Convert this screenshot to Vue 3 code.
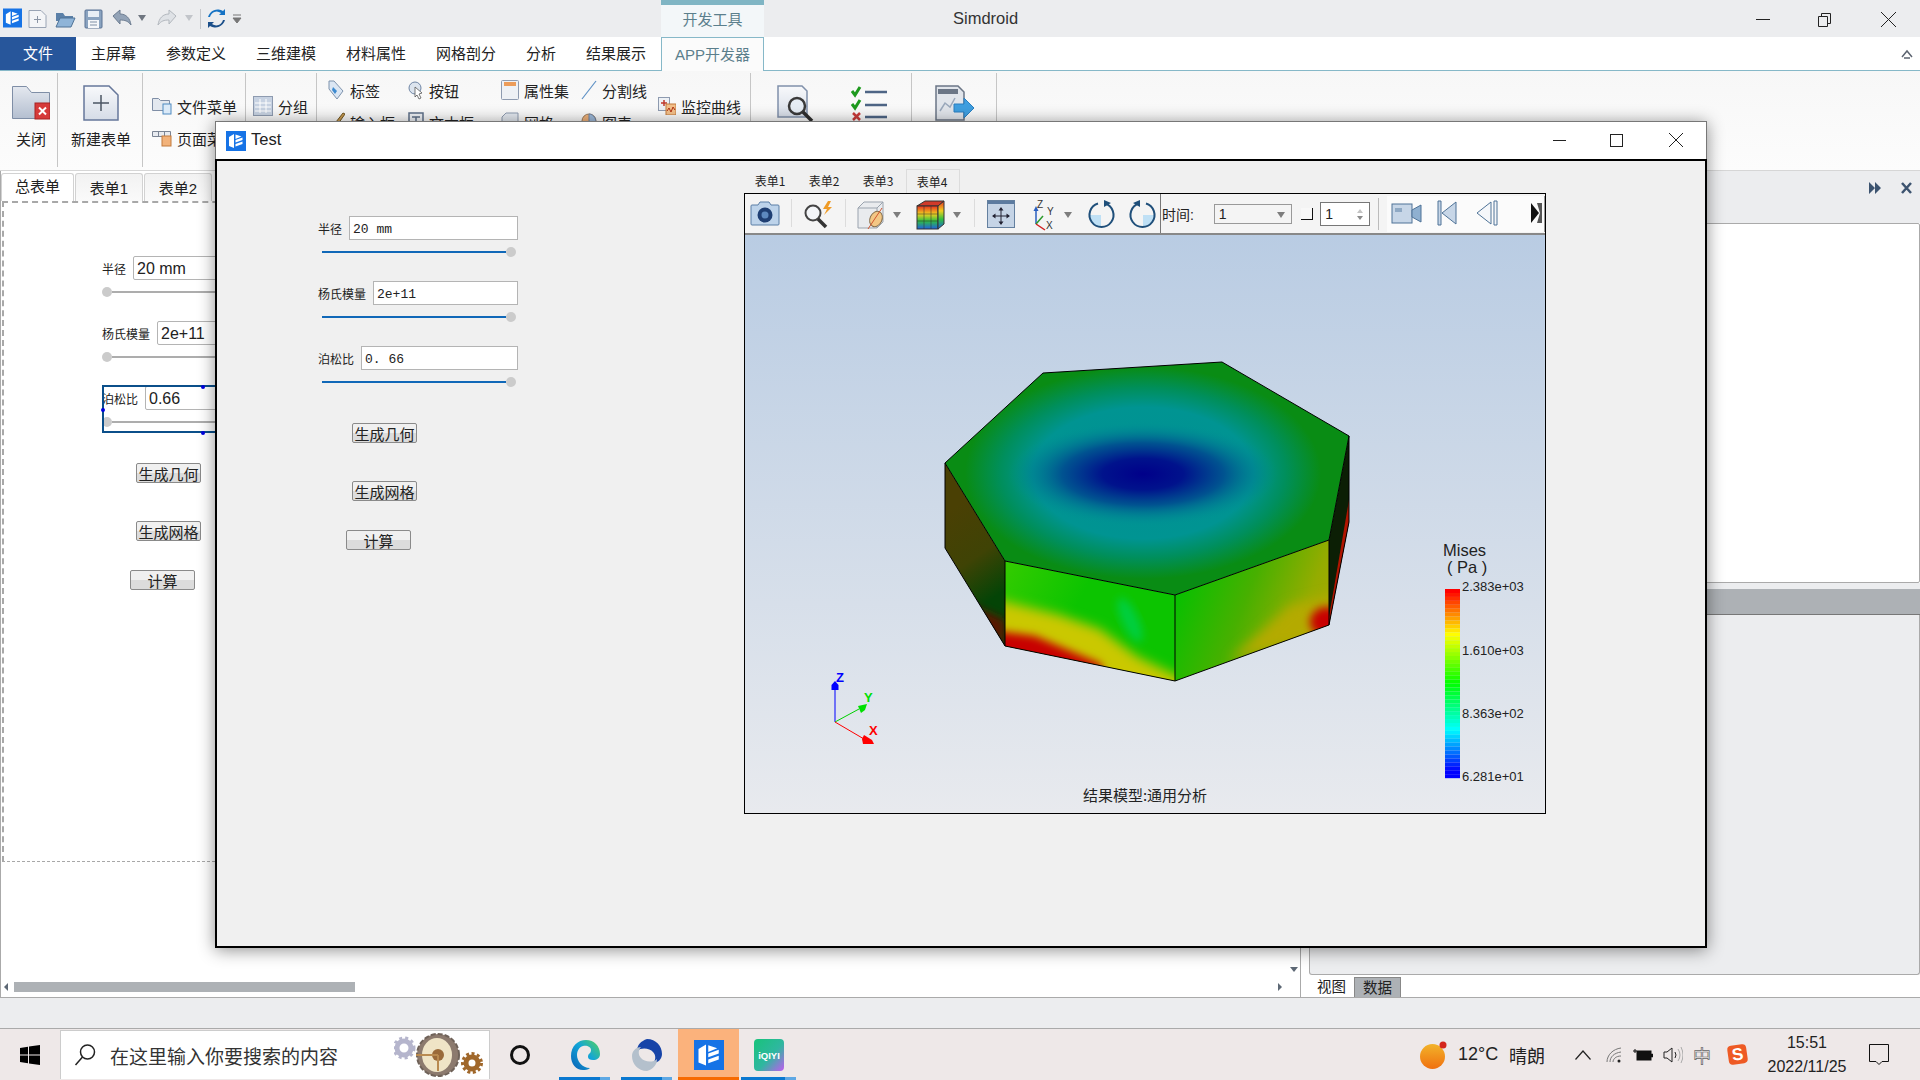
<script setup>
const menus = ['主屏幕', '参数定义', '三维建模', '材料属性', '网格剖分', '分析', '结果展示']

const fields = [
  { label: '半径', value: '20 mm' },
  { label: '杨氏模量', value: '2e+11' },
  { label: '泊松比', value: '0.66', picked: true },
]
const runForm = [
  { label: '半径', value: '20 mm' },
  { label: '杨氏模量', value: '2e+11' },
  { label: '泊松比', value: '0. 66' },
]

const stops = [[0, 0], [0.236, 60], [0.5, 120], [0.75, 180], [0.97, 240], [1, 240]]
function hueAt(t) {
  for (let i = 1; i < stops.length; i++) {
    if (t <= stops[i][0]) {
      const [a, ha] = stops[i - 1]
      const [b, hb] = stops[i]
      return ha + (hb - ha) * (t - a) / (b - a)
    }
  }
  return 240
}
const bands = Array.from({ length: 48 }, (_, i) => ({
  y: 589 + i * 3.94,
  fill: `hsl(${hueAt(i / 47)}, 100%, 50%)`,
}))
const ticks = [
  { y: 591, text: '2.383e+03' },
  { y: 655, text: '1.610e+03' },
  { y: 718, text: '8.363e+02' },
  { y: 781, text: '6.281e+01' },
]
</script>

<template>
  <div class="app">
    <svg class="defs">
      <defs>
        <symbol id="logo" viewBox="0 0 20 20">
          <rect width="20" height="20" fill="#1673e6" />
          <path d="M3 6l5-3v14l-5-2z" fill="#fff" />
          <path d="M9.5 3.5l6 2-6 2.5zM9.5 9l7-2.5V9l-7 2.500zM9.5 13l7-2.500V13l-7 2.500z" fill="#fff" />
        </symbol>
        <linearGradient id="folder" x1="0" y1="0" x2="0" y2="1">
          <stop offset="0" stop-color="#e4e8ef" />
          <stop offset="1" stop-color="#b4bfd0" />
        </linearGradient>
        <linearGradient id="sheet" x1="0" y1="0" x2="0" y2="1">
          <stop offset="0" stop-color="#f8f9fb" />
          <stop offset="1" stop-color="#d5dce7" />
        </linearGradient>
        <linearGradient id="rainbow" x1="0" y1="0" x2="0" y2="1">
          <stop offset="0" stop-color="#e83020" />
          <stop offset="0.35" stop-color="#f0d020" />
          <stop offset="0.65" stop-color="#30c040" />
          <stop offset="1" stop-color="#2060e0" />
        </linearGradient>
        <linearGradient id="edge" x1="0" y1="1" x2="1" y2="0">
          <stop offset="0" stop-color="#0a5fb4" />
          <stop offset="0.55" stop-color="#12a5d8" />
          <stop offset="1" stop-color="#56d35a" />
        </linearGradient>
        <linearGradient id="iqiyi" x1="0" y1="0" x2="1" y2="1">
          <stop offset="0" stop-color="#18c37a" />
          <stop offset="0.55" stop-color="#2fb7a0" />
          <stop offset="1" stop-color="#c05cf0" />
        </linearGradient>
        <linearGradient id="sun" x1="0" y1="0" x2="0" y2="1">
          <stop offset="0" stop-color="#f2b32a" />
          <stop offset="1" stop-color="#f0700f" />
        </linearGradient>
      </defs>
    </svg>

    <!-- title bar -->
    <header class="titlebar">
      <div class="quick">
        <svg width="250" height="37" viewBox="0 0 250 37">
          <use href="#logo" x="3" y="8" width="19" height="20" />
          <path d="M29 10.500h12l5 5v12H29z" fill="#f4f5f7" stroke="#9aa4b4" />
          <path d="M37.500 16v7M34 19.500h7" stroke="#8b95a5" />
          <path d="M56 13h7l2 3h8v5H56z" fill="#5b80a8" />
          <path d="M56 27l4-9h15l-4 9z" fill="#8fb4d8" stroke="#4f7397" />
          <rect x="85" y="10" width="17" height="18" rx="1" fill="#8aa3c0" stroke="#5a7394" />
          <rect x="88" y="11" width="11" height="6" fill="#e8eef5" />
          <rect x="88" y="20" width="11" height="8" fill="#f5f7fa" />
          <path d="M90 22h7M90 25h7" stroke="#7f8fa5" />
          <path d="M113 16l7-6v4c6 0 10 4 11 11-3-4-6-5-11-5v4z" fill="#93a3b7" stroke="#6c7c90" />
          <path d="M138 15h8l-4 6z" fill="#6f7680" />
          <path d="M176 16l-7-6v4c-6 0-10 4-11 11 3-4 6-5 11-5v4z" fill="#dfe2e6" stroke="#b2b7bd" />
          <path d="M185 15h8l-4 6z" fill="#c2c5ca" />
          <path d="M200.500 9v20" stroke="#c4c6ca" />
          <path d="M210 17a7 7 0 0 1 11-4l-2 2h6V9l-2 2a10 10 0 0 0-15 6z" fill="#1673c4" />
          <path d="M223 20a7 7 0 0 1-11 4l2-2h-6v6l2-2a10 10 0 0 0 15-6z" fill="#1b4f8a" />
          <path d="M233 15h8M233 18h8l-4 5z" fill="#777" stroke="#777" />
        </svg>
      </div>
      <div class="context-tab">开发工具</div>
      <div class="app-title">Simdroid</div>
      <svg class="win-btns" width="141" height="20" viewBox="0 0 141 20">
        <path d="M0 10.500h14" stroke="#222" />
        <path d="M62.500 7.500h9v10h-9zM65.500 7.500v-3h9v10h-3" fill="none" stroke="#222" />
        <path d="M125 3l15 15M140 3l-15 15" stroke="#222" />
      </svg>
    </header>

    <!-- menu row -->
    <nav class="menubar">
      <div class="file-tab">文件</div>
      <div v-for="m in menus" :key="m" class="menu-item">{{ m }}</div>
      <div class="menu-item active">APP开发器</div>
      <svg class="collapse" width="12" height="10" viewBox="0 0 12 10">
        <path d="M1 8l5-6 5 6M3 9h6" fill="none" stroke="#5c6470" stroke-width="1.500" />
      </svg>
    </nav>

    <!-- ribbon -->
    <section class="ribbon">
      <div class="rb-big g-close">
        <svg width="38" height="36" viewBox="0 0 38 36">
          <path d="M.5 1.500h14l5 6h18v26H.5z" fill="url(#folder)" stroke="#7f8ea6" />
          <rect x="23" y="18" width="15" height="16" fill="#d63a3a" stroke="#a82222" />
          <path d="M27 22.500l7 7M34 22.500l-7 7" stroke="#fff" stroke-width="2" />
        </svg>
        <span>关闭</span>
      </div>
      <div class="rb-big g-new">
        <svg width="36" height="36" viewBox="0 0 36 36">
          <path d="M1 1h25l9 9v25H1z" fill="url(#sheet)" stroke="#66779a" stroke-width="1.500" />
          <path d="M18 10v16M10 18h16" stroke="#4b5563" stroke-width="1.500" />
        </svg>
        <span>新建表单</span>
      </div>
      <div class="rb-col g-menu">
        <div class="rb-item">
          <svg width="20" height="18" viewBox="0 0 20 18">
            <path d="M.5 1.500h6l2 2h9v10H.5z" fill="#e3e8ef" stroke="#7f8ea6" />
            <rect x="11" y="7" width="8" height="10" fill="#dbeaf8" stroke="#4f8ac0" />
          </svg>
          <span>文件菜单</span>
        </div>
        <div class="rb-item">
          <svg width="20" height="18" viewBox="0 0 20 18">
            <path d="M.5 2.500h18v5H.5zM6.500 2.500v5M12.500 2.500v5" fill="#e8ebf0" stroke="#7b8494" />
            <rect x="10" y="7" width="9" height="10" fill="#f2b27a" stroke="#c27a3c" />
          </svg>
          <span>页面菜单</span>
        </div>
      </div>
      <div class="rb-col g-group">
        <div class="rb-item">
          <svg width="20" height="20" viewBox="0 0 20 20">
            <rect x=".5" y=".5" width="19" height="19" fill="#c7d2e2" stroke="#8e9bb0" />
            <path d="M7 3v14M13 3v14M2 7h16M2 11h16M2 15h16" stroke="#fff" />
          </svg>
          <span>分组</span>
        </div>
      </div>
      <div class="rb-grid g-widgets">
        <div class="rb-item">
          <svg width="18" height="20" viewBox="0 0 18 20">
            <path d="M2 1h5l9 10-6 8-8-10z" fill="#dbe6f3" stroke="#7f93ad" />
            <path d="M6 7l4 4-2 3-3-4z" fill="#3d8ad0" />
          </svg>
          <span>标签</span>
        </div>
        <div class="rb-item">
          <svg width="16" height="20" viewBox="0 0 16 20">
            <circle cx="7" cy="8" r="6" fill="#dce4ee" stroke="#6e85a5" />
            <path d="M7 7l7 6-3 1 2 4-2 1-2-4-2 2z" fill="#fff" stroke="#555" stroke-width=".8" />
          </svg>
          <span>按钮</span>
        </div>
        <div class="rb-item">
          <svg width="18" height="20" viewBox="0 0 18 20">
            <rect x=".5" y=".5" width="17" height="19" rx="1" fill="#eef1f5" stroke="#8e9bb0" />
            <rect x="3" y="2" width="12" height="4" fill="#ec9c5a" />
          </svg>
          <span>属性集</span>
        </div>
        <div class="rb-item">
          <svg width="16" height="20" viewBox="0 0 16 20">
            <path d="M1 19L15 1" stroke="#5d90c4" stroke-width="1.200" />
          </svg>
          <span>分割线</span>
        </div>
        <div class="rb-item rb-span">
          <svg width="18" height="18" viewBox="0 0 18 18">
            <rect x=".5" y=".5" width="11" height="13" fill="#eef1f5" stroke="#8e9bb0" />
            <path d="M6 3v6M3 6h6" stroke="#c0392b" stroke-width="1.500" />
            <rect x="8" y="7" width="10" height="11" fill="#f4c08a" stroke="#c27a3c" />
            <path d="M9 14l2-3 2 4 2-5 2 3" fill="none" stroke="#b03010" />
          </svg>
          <span>监控曲线</span>
        </div>
        <div class="rb-item">
          <svg width="18" height="20" viewBox="0 0 18 20">
            <path d="M0 10h11v9H0z" fill="#cfd6e0" stroke="#7b8494" />
            <path d="M9 10l7-9 2 1-7 10z" fill="#c99a50" stroke="#6e5520" />
          </svg>
          <span>输入框</span>
        </div>
        <div class="rb-item">
          <svg width="16" height="20" viewBox="0 0 16 20">
            <rect x="1" y="1" width="14" height="16" fill="#eef1f5" stroke="#5e6f88" stroke-width="1.500" />
            <path d="M4 5h8M8 5v8" stroke="#5e6f88" stroke-width="1.500" />
          </svg>
          <span>文本框</span>
        </div>
        <div class="rb-item">
          <svg width="18" height="20" viewBox="0 0 18 20">
            <path d="M1 5l4-4h12v14H1z" fill="#e3e8ef" stroke="#8e9bb0" />
          </svg>
          <span>网格</span>
        </div>
        <div class="rb-item">
          <svg width="16" height="20" viewBox="0 0 16 20">
            <circle cx="8" cy="9" r="7" fill="#f0b27a" stroke="#9a7a5a" />
            <path d="M8 9V2a7 7 0 0 1 6 10z" fill="#9db9d9" stroke="#6e85a5" />
          </svg>
          <span>图表</span>
        </div>
      </div>
      <div class="rb-group g-tools">
        <svg class="ic-find" width="38" height="38" viewBox="0 0 38 38">
          <path d="M1 1h24l5 5v26H1z" fill="url(#sheet)" stroke="#8090aa" stroke-width="1.500" />
          <circle cx="20" cy="21" r="8" fill="#e6edf5" stroke="#3a3a3a" stroke-width="2.500" />
          <path d="M26 27l9 9" stroke="#2f2f2f" stroke-width="3.500" />
        </svg>
        <svg class="ic-check" width="38" height="36" viewBox="0 0 38 36">
          <path d="M1 5l3 4 5-8" fill="none" stroke="#1e9a1e" stroke-width="3" />
          <path d="M1 18l3 4 5-8" fill="none" stroke="#1e9a1e" stroke-width="3" />
          <path d="M2 27l7 7M9 27l-7 7" stroke="#c83a3a" stroke-width="2.500" />
          <path d="M14 6h22M14 19h22M14 31h22" stroke="#4e6585" stroke-width="2.500" />
        </svg>
      </div>
      <div class="rb-group g-export">
        <svg width="40" height="36" viewBox="0 0 40 36">
          <path d="M1 1h22l6 6v28H1z" fill="#e1e5eb" stroke="#6b7686" stroke-width="1.500" />
          <rect x="3" y="4" width="20" height="5" fill="#6b7686" />
          <path d="M5 26l5-8 5 4 5-9" fill="none" stroke="#9aa8bb" stroke-width="1.500" />
          <path d="M19 19h10v-6l10 10-10 10v-6H19z" fill="#3f9fe0" stroke="#2a7fc0" />
        </svg>
      </div>
    </section>

    <!-- workspace under the dialog -->
    <main class="workspace">
      <section class="designer">
        <div class="doc-tabs">
          <div class="doc-tab current">总表单</div>
          <div class="doc-tab">表单1</div>
          <div class="doc-tab narrow">表单2</div>
        </div>
        <div class="canvas">
          <div class="form draft">
            <div v-for="f in fields" :key="f.label" class="field" :class="{ picked: f.picked }">
              <div class="field-row">
                <label>{{ f.label }}</label>
                <div class="input">{{ f.value }}</div>
              </div>
              <div class="slider"><i class="knob"></i><i class="track"></i></div>
              <template v-if="f.picked">
                <b class="handle h-left"></b>
                <b class="handle h-top"></b>
                <b class="handle h-bottom"></b>
              </template>
            </div>
            <button class="btn">生成几何</button>
            <button class="btn second">生成网格</button>
            <button class="btn third">计算</button>
          </div>
        </div>
        <div class="hscroll">
          <i class="tri-left"></i>
          <div class="thumb"></div>
          <i class="tri-right"></i>
        </div>
        <i class="tri-down"></i>
      </section>

      <section class="side">
        <div class="side-head">
          <svg width="44" height="14" viewBox="0 0 44 14">
            <path d="M0 1l6 6-6 6zM6 1l6 6-6 6z" fill="#3d5470" />
            <path d="M33 2l9 10M42 2l-9 10" stroke="#3d5470" stroke-width="2.500" />
          </svg>
        </div>
        <div class="side-box"></div>
        <div class="side-bar"></div>
        <div class="side-rest"></div>
        <div class="side-tabs">
          <span class="side-tab">视图</span>
          <span class="side-tab on">数据</span>
        </div>
      </section>
    </main>

    <footer class="statusbar"></footer>

    <!-- taskbar -->
    <footer class="taskbar">
      <div class="start">
        <svg width="20" height="20" viewBox="0 0 20 20">
          <path d="M0 3l8-1.200v7.700H0zM9 1.600L20 0v9.500H9zM0 10.500h8v7.700L0 17zM9 10.500h11V20L9 18.400z" fill="#000" />
        </svg>
      </div>
      <div class="search">
        <svg width="22" height="24" viewBox="0 0 22 24">
          <circle cx="13.500" cy="9" r="7" fill="none" stroke="#222" stroke-width="1.500" />
          <path d="M8.500 14L1.500 22" stroke="#222" stroke-width="1.500" />
        </svg>
        <span class="search-text">在这里输入你要搜索的内容</span>
        <svg class="doodle" width="92" height="48" viewBox="0 0 92 48">
          <circle cx="10" cy="17" r="7" fill="none" stroke="#b5b5cc" stroke-width="5" />
          <circle cx="10" cy="17" r="10" fill="none" stroke="#b5b5cc" stroke-width="3" stroke-dasharray="3 3" />
          <circle cx="44" cy="24" r="21" fill="#8c7a6e" stroke="#6f6259" stroke-width="2" stroke-dasharray="5 2" />
          <ellipse cx="43" cy="24" rx="15" ry="17" fill="#efe4c6" />
          <circle cx="44" cy="24" r="6" fill="#9a6a3a" />
          <path d="M22 24h22M44 24v16" stroke="#b98a50" stroke-width="2" />
          <circle cx="78" cy="32" r="6" fill="none" stroke="#a0672a" stroke-width="5" />
          <circle cx="78" cy="32" r="9.500" fill="none" stroke="#a0672a" stroke-width="3" stroke-dasharray="3 2.500" />
        </svg>
      </div>
      <div class="cortana"><i class="ring"></i></div>
      <div class="task open">
        <svg width="30" height="32" viewBox="0 0 30 32">
          <path d="M1 17C1 7 8 1 16 1c8 0 14 6 14 14 0 4-3 6-7 6-3 0-5-1-5-3 0-4 3-3 3-7 0-3-4-5-8-4-4 1-6 5-6 9 0 6 5 13 13 13-2 2-5 2-7 2C6 31 1 25 1 17z" fill="url(#edge)" />
        </svg>
        <i class="bar blue"></i>
      </div>
      <div class="task open second-app">
        <svg width="30" height="32" viewBox="0 0 30 32">
          <path d="M15 0c9 0 15 7 15 15 0 5-4 9-9 9 3-3 3-8 0-11-3-4-12-5-16-1 0-6 4-10 10-12z" fill="#1744a8" />
          <path d="M15 32C6 32 0 25 0 17c0-5 4-9 9-9-3 3-3 8 0 11 3 4 12 5 16 1 0 6-4 10-10 12z" fill="#b4c0cc" />
        </svg>
        <i class="bar blue"></i>
      </div>
      <div class="task current-app">
        <svg width="30" height="32" viewBox="0 0 20 21.300">
          <use href="#logo" width="20" height="21.300" />
        </svg>
        <i class="bar orange"></i>
      </div>
      <div class="task open last-app">
        <svg width="30" height="32" viewBox="0 0 30 32">
          <rect width="30" height="32" rx="4" fill="url(#iqiyi)" />
          <text x="15" y="20" text-anchor="middle" class="iq">iQIYI</text>
        </svg>
        <i class="bar blue"></i>
      </div>
      <div class="tray">
        <div class="t-weather">
          <svg width="27" height="28" viewBox="0 0 27 28">
            <ellipse cx="12.500" cy="15.500" rx="12.500" ry="12.500" fill="url(#sun)" />
            <circle cx="23" cy="4" r="3.500" fill="#d4261c" />
          </svg>
        </div>
        <div class="t-temp">12°C</div>
        <div class="t-sky">晴朗</div>
        <div class="t-icon w31">
          <svg width="16" height="10" viewBox="0 0 16 10"><path d="M.5 9.500L8 1l7.500 8.500" fill="none" stroke="#222" stroke-width="1.200" /></svg>
        </div>
        <div class="t-icon w27">
          <svg width="16" height="16" viewBox="0 0 16 16">
            <path d="M1 15C1 8 7 2 15 1M4 15c0-5 4-9 11-10M7 15c0-3 3-6 8-6" fill="none" stroke="#777" />
            <circle cx="13" cy="14" r="1.500" fill="#222" />
          </svg>
        </div>
        <div class="t-icon w30">
          <svg width="20" height="14" viewBox="0 0 20 14">
            <rect x="4" y="3" width="14" height="9" fill="#111" stroke="#111" />
            <path d="M18.500 6v3h1V6zM0 3h4M2 1v4" stroke="#111" />
          </svg>
        </div>
        <div class="t-icon w30">
          <svg width="20" height="18" viewBox="0 0 20 18">
            <path d="M1 6h3l5-4v14l-5-4H1z" fill="none" stroke="#222" />
            <path d="M12 6q2 3 0 6" fill="none" stroke="#222" />
            <path d="M15 3q4 6 0 12M18 1q4 8 0 16" fill="none" stroke="#aaa" />
          </svg>
        </div>
        <div class="t-icon w35 t-ime">中</div>
        <div class="t-icon w30"><span class="sogou">S</span></div>
        <div class="clock">
          <span>15:51</span>
          <span>2022/11/25</span>
        </div>
        <div class="t-note">
          <svg width="20" height="22" viewBox="0 0 20 22">
            <path d="M.5.500h19v17h-6.500l-3 3-3-3H.5z" fill="none" stroke="#111" />
          </svg>
        </div>
      </div>
    </footer>

    <!-- floating dialog -->
    <div class="dialog">
      <div class="dlg-title">
        <svg width="20" height="20" viewBox="0 0 20 20"><use href="#logo" width="20" height="20" /></svg>
        <span class="dlg-name">Test</span>
        <svg class="dlg-btns" width="131" height="18" viewBox="0 0 131 18">
          <path d="M0 9.500h13" stroke="#222" />
          <rect x="57.500" y="3.500" width="12" height="12" fill="none" stroke="#222" />
          <path d="M116 2l14 14M130 2l-14 14" stroke="#222" />
        </svg>
      </div>
      <div class="dlg-body">
        <div class="form run">
          <div v-for="f in runForm" :key="f.label" class="field">
            <div class="field-row">
              <label>{{ f.label }}</label>
              <div class="input">{{ f.value }}</div>
            </div>
            <div class="slider"><i class="track"></i><i class="knob"></i></div>
          </div>
          <button class="btn">生成几何</button>
          <button class="btn second">生成网格</button>
          <button class="btn third">计算</button>
        </div>

        <div class="viewer">
          <div class="view-tabs">
            <div class="view-tab">表单1</div>
            <div class="view-tab">表单2</div>
            <div class="view-tab">表单3</div>
            <div class="view-tab on">表单4</div>
          </div>
          <div class="frame">
            <div class="tools">
              <svg class="strip" width="416" height="39" viewBox="745 194 416 39">
                <!-- camera -->
                <path d="M752 205h6l2-3h9l2 3h7a1 1 0 0 1 1 1v18a1 1 0 0 1-1 1h-26a1 1 0 0 1-1-1v-18a1 1 0 0 1 1-1z" fill="#bdd3ea" stroke="#5a7ea6" />
                <circle cx="765" cy="215" r="7.500" fill="#1f3f73" />
                <circle cx="765" cy="215" r="3.500" fill="#5d89bf" />
                <path d="M791.500 199v28M845.500 199v28M974.500 199v28" stroke="#dcdcdc" />
                <!-- magnifier -->
                <circle cx="813" cy="213" r="7.500" fill="#f3f5f8" stroke="#444" stroke-width="2" />
                <path d="M818 219l8 8" stroke="#333" stroke-width="3.500" />
                <path d="M828 201l-5 8h4l-3 6 8-8h-4l3-6z" fill="#ef9b26" />
                <!-- section cube -->
                <path d="M858 208l6-6h19v20l-6 6h-19z" fill="#e9ebee" stroke="#9aa3ae" />
                <path d="M858 208h19v20M877 208l6-6" fill="none" stroke="#9aa3ae" />
                <ellipse cx="876" cy="219" rx="6" ry="8" transform="rotate(25 876 219)" fill="#f3c785" stroke="#86704f" />
                <path d="M868 229l14-21" stroke="#d0552e" />
                <path d="M893 212h8l-4 6zM953 212h8l-4 6zM1064 212h8l-4 6z" fill="#7d7d7d" />
                <!-- colour cube -->
                <path d="M917 206l8-5h19l-6 5z" fill="#d03a2a" stroke="#333" />
                <rect x="917" y="206" width="21" height="23" fill="url(#rainbow)" stroke="#333" />
                <path d="M938 206l6-5v23l-6 5z" fill="url(#rainbow)" stroke="#333" />
                <path d="M924 206v23M931 206v23M917 214h21M917 221h21" stroke="#33333388" />
                <!-- fit -->
                <rect x="987.500" y="200.500" width="27" height="27" fill="#c5d4e6" stroke="#64809f" />
                <rect x="988" y="201" width="26" height="3" fill="#5c7ba0" />
                <path d="M1001 208v16M993 216h16" stroke="#223" />
                <path d="M1001 207l-2.500 3.500h5zM1001 225l-2.500-3.500h5zM992 216l3.500-2.500v5zM1010 216l-3.500-2.500v5z" fill="#223" />
                <!-- axes -->
                <path d="M1036 224v-15" stroke="#2a5fc0" stroke-width="1.500" />
                <path d="M1036 206l-2.500 5h5z" fill="#2a5fc0" />
                <path d="M1036 224l7-8" stroke="#2a9a2a" stroke-width="1.500" />
                <path d="M1036 224l9 6" stroke="#d02020" stroke-width="1.500" />
                <text x="1037" y="208" class="tool-axis">Z</text>
                <text x="1047" y="215" class="tool-axis">Y</text>
                <text x="1046" y="229" class="tool-axis">X</text>
                <!-- rotate -->
                <path d="M1101 215v12a12 12 0 0 1-12-12z" fill="#bfe0f5" />
                <path d="M1105 203.500a12 12 0 1 1-7 0" fill="none" stroke="#1f4f7a" stroke-width="2" />
                <path d="M1111 203l-7-3v7z" fill="#1f4f7a" />
                <path d="M1143 215v12a12 12 0 0 0 12-12z" fill="#bfe0f5" />
                <path d="M1139 203.500a12 12 0 1 0 7 0" fill="none" stroke="#1f4f7a" stroke-width="2" />
                <path d="M1133 203l7-3v7z" fill="#1f4f7a" />
                <path d="M1160.500 194v39" stroke="#777" />
              </svg>
              <span class="time-label">时间:</span>
              <div class="combo">1<i class="caret"></i></div>
              <i class="tick"></i>
              <div class="spin">1
                <span class="spin-arrows"><i class="up"></i><i class="down"></i></span>
              </div>
              <i class="tools-sep"></i>
              <svg class="player" width="157" height="36" viewBox="1388 197 157 36">
                <rect x="1393" y="205" width="20" height="19" fill="#c7d6e7" stroke="#4f7397" />
                <rect x="1396" y="209" width="7" height="4" fill="#8fa9c4" />
                <path d="M1413 211l9-5v17l-9-5z" fill="#8fb0d0" stroke="#4f7397" />
                <path d="M1439 202v24h3v-24zM1443 214l14-11v22z" fill="#c7d6e7" stroke="#4f7397" />
                <path d="M1495 202v24h3v-24zM1492 203v22l-14-11z" fill="#f5f7fa" stroke="#4f7397" />
                <path d="M1532 204l8 10-8 10z" fill="#111" />
                <path d="M1538 204h5v20h-5l3-10z" fill="#555" />
              </svg>
            </div>

            <svg class="scene" width="800" height="578" viewBox="745 235 800 578">
              <defs>
                <linearGradient id="sky" x1="0" y1="0" x2="0" y2="1">
                  <stop offset="0" stop-color="#b9cce3" />
                  <stop offset="1" stop-color="#e8eaee" />
                </linearGradient>
                <radialGradient id="teal" gradientUnits="userSpaceOnUse" cx="0" cy="0" r="1" gradientTransform="translate(1143 473) scale(178 106)">
                  <stop offset="0" stop-color="#009095" />
                  <stop offset="0.62" stop-color="#009492" />
                  <stop offset="0.8" stop-color="#008f5c" />
                  <stop offset="1" stop-color="#098c14" />
                </radialGradient>
                <radialGradient id="navy" gradientUnits="userSpaceOnUse" cx="0" cy="0" r="1" gradientTransform="translate(1143 474) scale(135 52)">
                  <stop offset="0" stop-color="#00008a" />
                  <stop offset="0.3" stop-color="#00108c" stop-opacity=".98" />
                  <stop offset="0.6" stop-color="#004c90" stop-opacity=".9" />
                  <stop offset="1" stop-color="#009095" stop-opacity="0" />
                </radialGradient>
                <linearGradient id="faceL" gradientUnits="userSpaceOnUse" x1="1005" y1="561" x2="1080" y2="600">
                  <stop offset="0" stop-color="#34cc00" />
                  <stop offset="1" stop-color="#0cc400" />
                </linearGradient>
                <linearGradient id="faceR" gradientUnits="userSpaceOnUse" x1="1175" y1="600" x2="1329" y2="660">
                  <stop offset="0" stop-color="#08c000" />
                  <stop offset="0.4" stop-color="#48b000" />
                  <stop offset="0.75" stop-color="#94ac00" />
                  <stop offset="1" stop-color="#b0a800" />
                </linearGradient>
                <linearGradient id="faceB" gradientUnits="userSpaceOnUse" x1="950" y1="510" x2="1005" y2="590">
                  <stop offset="0" stop-color="#4a4004" />
                  <stop offset="0.55" stop-color="#3f4305" />
                  <stop offset="1" stop-color="#044406" />
                </linearGradient>
                <clipPath id="clipL"><path d="M1005 561l170 34v86l-170-35z" /></clipPath>
                <clipPath id="clipR"><path d="M1175 595l154-55v85l-154 56z" /></clipPath>
                <clipPath id="clipB"><path d="M945 463l60 98v85l-60-98z" /></clipPath>
                <filter id="soft" x="-30%" y="-30%" width="160%" height="160%"><feGaussianBlur stdDeviation="6" /></filter>
                <filter id="softer" x="-30%" y="-30%" width="160%" height="160%"><feGaussianBlur stdDeviation="4" /></filter>
              </defs>

              <rect x="745" y="235" width="800" height="578" fill="url(#sky)" />

              <!-- hexagonal part -->
              <path d="M945 463l60 98v85l-60-98z" fill="url(#faceB)" />
              <g clip-path="url(#clipB)">
                <path d="M960 600l45 50v-30z" fill="#5a1400" filter="url(#softer)" />
              </g>
              <path d="M1349 436l-20 104v85l20-103z" fill="#0c1f05" />
              <path d="M1349 500v22l-20 103v-8z" fill="#b01500" />
              <path d="M1005 561l170 34v86l-170-35z" fill="url(#faceL)" />
              <g clip-path="url(#clipL)">
                <path d="M990 598l70 17 40 14 38 28 50 24v30l-198-40z" fill="#cac800" filter="url(#soft)" />
                <path d="M990 630l45 6 66 28 6 26-117-22z" fill="#c80000" filter="url(#softer)" />
                <ellipse cx="1130" cy="620" rx="8" ry="24" transform="rotate(-25 1130 620)" fill="#00cf40" filter="url(#softer)" />
              </g>
              <path d="M1175 595l154-55v85l-154 56z" fill="url(#faceR)" />
              <g clip-path="url(#clipR)">
                <path d="M1230 660l60-55 45-10v40z" fill="#b4aa00" filter="url(#soft)" />
                <ellipse cx="1327" cy="622" rx="17" ry="15" fill="#c80000" filter="url(#softer)" />
              </g>
              <path d="M945 463l98-90 179-11 127 74-20 104-154 55-170-34z" fill="url(#teal)" />
              <path d="M945 463l98-90 179-11 127 74-20 104-154 55-170-34z" fill="url(#navy)" />
              <g fill="none" stroke="#000" stroke-width="1">
                <path d="M945 463l98-90 179-11 127 74-20 104-154 55-170-34z" />
                <path d="M945 463v85l60 98 170 35 154-56 20-103v-86" />
                <path d="M1005 561v85M1175 595v86M1329 540v85" />
              </g>

              <!-- triad -->
              <path d="M835 722v-36" stroke="#0000ff" />
              <path d="M835 681l-3.500 4v5h7v-5z" fill="#0000ff" />
              <text x="836" y="682" class="axis" fill="#0000ff">Z</text>
              <path d="M835 722l24-13" stroke="#00d000" />
              <path d="M867 704l-9 2 3 7 4-3z" fill="#00e000" />
              <text x="864" y="702" class="axis" fill="#00e000">Y</text>
              <path d="M835 722l29 17" stroke="#ff0000" />
              <path d="M864 735l-2 4 1 5h11l-2-4z" fill="#ff0000" />
              <text x="869" y="735" class="axis" fill="#ff0000">X</text>

              <!-- legend -->
              <text x="1443" y="556" class="legend-title">Mises</text>
              <text x="1447" y="573" class="legend-title">( Pa )</text>
              <rect v-for="b in bands" :key="b.y" x="1445" :y="b.y" width="15" height="4" :fill="b.fill" />
              <text v-for="t in ticks" :key="t.text" x="1462" :y="t.y" class="legend-tick">{{ t.text }}</text>
              <text x="1145" y="801" text-anchor="middle" class="caption">结果模型:通用分析</text>
            </svg>
          </div>
        </div>
      </div>
    </div>
  </div>
</template>

<style scoped>
.app {
  position: relative;
  display: flex;
  flex-direction: column;
  width: 1920px;
  height: 1080px;
  overflow: hidden;
  background: #fff;
  color: #222;
  font-family: "Liberation Sans", "Noto Sans CJK SC", sans-serif;
  font-size: 15px;
}
.defs { position: absolute; width: 0; height: 0; }
svg { display: block; flex: none; }

/* title bar */
.titlebar {
  display: flex;
  align-items: center;
  height: 37px;
  flex: none;
  background: #ecedef;
}
.quick { width: 661px; }
.context-tab {
  width: 103px;
  height: 37px;
  box-sizing: border-box;
  border-top: 5px solid #7fb5c4;
  background: #f3f7f9;
  color: #5b7f8c;
  font-size: 15px;
  line-height: 30px;
  text-align: center;
}
.app-title { margin-left: 189px; font-size: 16.5px; color: #333; }
.win-btns { margin-left: auto; margin-right: 23px; }

/* menu */
.menubar {
  display: flex;
  align-items: stretch;
  height: 34px;
  flex: none;
  box-sizing: border-box;
  border-bottom: 1px solid #86b8c8;
  line-height: 33px;
}
.file-tab { width: 76px; background: #27569b; color: #fff; text-align: center; }
.menu-item { padding: 0 15px; white-space: nowrap; }
.menu-item.active {
  width: 103px;
  box-sizing: border-box;
  height: 34px;
  padding: 0;
  text-align: center;
  color: #5b7f8c;
  background: #fbfbfb;
  border: 1px solid #86b8c8;
  border-bottom: 0;
}
.collapse { margin: 12px 7px 0 auto; }

/* ribbon */
.ribbon {
  display: flex;
  height: 100px;
  flex: none;
  box-sizing: border-box;
  border-bottom: 1px solid #d6d6d6;
  background: linear-gradient(#f7f7f7, #fcfcfc);
  font-size: 15px;
}
.ribbon > div { box-sizing: border-box; border-right: 1px solid #c6c6c6; height: 94px; margin-top: 2px; }
.rb-big { display: flex; flex-direction: column; align-items: center; padding-top: 12px; }
.rb-big span { margin-top: 7px; white-space: nowrap; }
.g-close { width: 58px; padding-left: 5px; }
.g-new { width: 85px; padding-left: 2px; }
.rb-col { padding-top: 17px; }
.g-menu { width: 103px; padding-left: 9px; }
.g-group { width: 71px; padding-left: 7px; }
.rb-item { display: flex; align-items: center; gap: 5px; height: 32px; white-space: nowrap; }
.g-widgets {
  display: grid;
  grid-template-columns: 81px 93px 80px 77px 1fr;
  grid-template-rows: 32px 32px;
  width: 434px;
  padding: 1px 0 0 10px;
}
.rb-span { grid-row: 1 / 3; grid-column: 5; align-self: start; margin-top: 16px; }
.rb-group { display: flex; }
.g-tools { width: 161px; }
.ic-find { margin: 12px 0 0 26px; }
.ic-check { margin: 13px 0 0 36px; }
.g-export { width: 85px; padding: 12px 0 0 23px; }
.ribbon > .g-export { height: 94px; }

/* workspace */
.workspace { display: flex; flex: 1; min-height: 0; }
.designer {
  position: relative;
  display: flex;
  flex-direction: column;
  width: 1301px;
  box-sizing: border-box;
  border-left: 1px solid #aaa;
  border-right: 1px solid #aaa;
}
.doc-tabs { display: flex; height: 30px; padding-top: 2px; box-sizing: border-box; }
.doc-tab {
  width: 68px;
  box-sizing: border-box;
  margin-right: 1px;
  border: 1px solid #d2d2d2;
  border-bottom: 0;
  border-radius: 3px 3px 0 0;
  background: linear-gradient(#f2f2f2, #fafafa);
  text-align: center;
  font-size: 15px;
  line-height: 30px;
}
.doc-tab.current { width: 73px; background: #fff; line-height: 26px; }
.canvas {
  height: 661px;
  box-sizing: border-box;
  margin-left: 1px;
  border-top: 2px dashed #a8a8a8;
  border-left: 2px dashed #a8a8a8;
  border-bottom: 1px dashed #a8a8a8;
  padding: 53px 0 0 98px;
}
.form { display: flex; flex-direction: column; width: 200px; align-items: flex-start; font-size: 12px; }
.field { position: relative; width: 100%; height: 65px; }
.field-row { display: flex; align-items: center; gap: 7px; height: 24px; }
.field-row label { white-space: nowrap; color: #222; }
.input {
  flex: 1;
  height: 24px;
  box-sizing: border-box;
  border: 1px solid #b4b4b4;
  background: #fff;
  padding-left: 3px;
  white-space: nowrap;
}
.draft .input { font-size: 16px; border-radius: 2px; line-height: 24px; }
.run .input { font-family: "Liberation Mono", monospace; font-size: 13px; border-width: 1.5px; line-height: 25px; }
.slider { display: flex; align-items: center; height: 10px; margin-top: 7px; }
.run .slider { margin: 7px 2px 0 4px; }
.track { flex: 1; height: 2.5px; background: #adadad; }
.run .track { background: #1068b8; }
.knob { width: 10px; height: 10px; border-radius: 50%; background: #cbcbcb; flex: none; }
.picked::before {
  content: "";
  position: absolute;
  left: 0;
  top: -1px;
  width: 400px;
  height: 48px;
  box-sizing: border-box;
  border: 2px solid #0b4f8a;
  pointer-events: none;
}
.handle { position: absolute; width: 4px; height: 4px; background: #0000e0; border-radius: 50%; }
.h-left { left: -1px; top: 22px; }
.h-top { left: 99px; top: -1px; }
.h-bottom { left: 99px; top: 45px; }
.btn {
  width: 65px;
  height: 20px;
  margin: 12px 0 0 34px;
  padding: 0;
  border: 1px solid #8a8a8a;
  border-radius: 2px;
  background: linear-gradient(#f0f0f0 50%, #dcdcdc 50%);
  color: #222;
  font-family: "Noto Sans CJK SC", sans-serif;
  font-size: 15px;
  line-height: 17px;
}
.btn.second { margin-top: 38px; }
.btn.third { margin: 29px 0 0 28px; }
.hscroll { display: flex; align-items: center; height: 10px; margin-top: auto; margin-bottom: 5px; }
.tri-left { margin-left: 3px; border: 4px solid transparent; border-right: 4px solid #5d6875; border-left: 0; }
.thumb { width: 341px; height: 10px; margin-left: 6px; background: #adb1b5; }
.tri-right { margin-left: auto; margin-right: 18px; border: 4px solid transparent; border-left: 4px solid #5d6875; border-right: 0; }
.tri-down {
  position: absolute;
  right: 2px;
  bottom: 25px;
  border: 4px solid transparent;
  border-top: 5px solid #5d6875;
  border-bottom: 0;
}

.side { display: flex; flex-direction: column; width: 611px; margin-left: 8px; }
.side-head { display: flex; justify-content: flex-end; align-items: flex-start; height: 52px; padding: 10px 7px 0 0; box-sizing: border-box; background: #ecedef; }
.side-box { height: 360px; box-sizing: border-box; background: #fff; border: 1px solid #aaa; border-radius: 2px; }
.side-bar { height: 26px; margin-top: 6px; background: #adb1b5; border-bottom: 1px solid #777; box-sizing: border-box; box-shadow: 0 -6px 0 #ecedef; }
.side-rest { flex: 1; background: #ecedef; border: 1px solid #aaa; border-top: 0; border-radius: 0 0 3px 3px; }
.side-tabs { display: flex; height: 22px; align-items: flex-end; font-size: 14.5px; }
.side-tab { width: 45px; height: 20px; line-height: 21px; text-align: center; box-sizing: border-box; }
.side-tab.on { width: 47px; background: #adb1b5; border: 1px solid #888; border-bottom: 0; }

.statusbar {
  height: 32px;
  flex: none;
  box-sizing: border-box;
  background: #ecedef;
  border-top: 1px solid #aaa;
  border-bottom: 1px solid #aaa;
}

/* taskbar */
.taskbar { display: flex; height: 51px; flex: none; background: #eee8e8; }
.start { display: flex; width: 60px; align-items: center; justify-content: center; }
.search {
  display: flex;
  align-items: center;
  width: 430px;
  height: 49px;
  margin-top: 1px;
  box-sizing: border-box;
  padding-left: 13px;
  background: #fff;
  border: 1px solid #ccc;
  border-bottom: 0;
}
.search-text { margin-left: 14px; font-size: 19px; color: #333; white-space: nowrap; }
.doodle { margin-left: 56px; }
.cortana { display: flex; width: 69px; justify-content: flex-start; align-items: center; padding-left: 20px; box-sizing: border-box; }
.ring { width: 14px; height: 14px; border: 3px solid #111; border-radius: 50%; }
.task { position: relative; display: flex; width: 51px; align-items: center; justify-content: center; }
.second-app { margin-left: 11px; }
.current-app { width: 61px; margin-left: 6px; background: #fbb27c; }
.last-app { width: 55px; margin-left: 2px; }
.bar { position: absolute; left: 0; right: 0; bottom: 0; height: 3px; }
.bar.blue { background: linear-gradient(90deg, #0a78d0 80%, #5ea8e4 80%); }
.bar.orange { background: #f76a00; }
.iq { font-family: "Liberation Sans", sans-serif; font-size: 9.5px; font-weight: 700; fill: #fff; }
.tray { display: flex; align-items: center; width: 500px; margin-left: auto; }
.t-weather { width: 38px; }
.t-temp { width: 51px; font-size: 18px; color: #222; }
.t-sky { width: 66px; font-size: 18px; color: #222; }
.t-icon { display: flex; align-items: center; height: 100%; }
.w31 { width: 31px; }
.w27 { width: 27px; }
.w30 { width: 30px; }
.w35 { width: 35px; }
.t-ime { font-size: 18px; color: #f2eeee; -webkit-text-stroke: 0.7px #666; }
.sogou {
  display: block;
  width: 19px;
  height: 19px;
  background: #ee5a24;
  border-radius: 4px;
  transform: rotate(-8deg);
  color: #fff;
  font-weight: 700;
  font-size: 17px;
  line-height: 19px;
  text-align: center;
}
.clock { display: flex; flex-direction: column; width: 98px; align-items: center; font-size: 16px; line-height: 24px; color: #222; }
.t-note { margin-left: 13px; }

/* dialog */
.dialog {
  position: absolute;
  left: 215px;
  top: 121px;
  display: flex;
  flex-direction: column;
  width: 1492px;
  height: 827px;
  box-shadow: 0 2px 16px rgba(0, 0, 0, 0.45);
}
.dlg-title {
  display: flex;
  align-items: center;
  height: 38px;
  flex: none;
  box-sizing: border-box;
  padding: 0 0 2px 10px;
  border: 1px solid #777;
  border-bottom: 0;
  background: #fff;
}
.dlg-title > svg:first-child { margin-top: 2px; }
.dlg-name { margin-left: 5px; font-size: 16.5px; color: #222; }
.dlg-btns { margin-left: auto; margin-right: 22px; }
.dlg-body {
  display: flex;
  flex: 1;
  box-sizing: border-box;
  border: 2px solid #000;
  background: #f0f0f0;
}
.run { margin: 55px 0 0 101px; }
.viewer { margin-left: 226px; padding-top: 8px; width: 802px; }
.view-tabs { display: flex; height: 24px; font-size: 12px; font-family: "Noto Sans CJK SC", sans-serif; }
.view-tab { width: 54px; padding-right: 2px; text-align: center; line-height: 24px; box-sizing: border-box; }
.view-tab.on { border: 1px solid #dcdcdc; border-bottom: 0; }
.frame { width: 802px; height: 621px; box-sizing: border-box; border: 1px solid #000; }
.tools {
  display: flex;
  align-items: center;
  height: 41px;
  box-sizing: border-box;
  background: #f4f4f4;
  border-bottom: 2px solid #888;
}
.time-label { width: 53px; padding-left: 1px; box-sizing: border-box; font-size: 14px; white-space: nowrap; }
.combo {
  position: relative;
  width: 79px;
  height: 20px;
  box-sizing: border-box;
  border: 1px solid #999;
  padding-left: 4px;
  font-size: 14px;
  line-height: 18px;
}
.caret {
  position: absolute;
  right: 6px;
  top: 7px;
  border: 4px solid transparent;
  border-top: 6px solid #7d7d7d;
  border-bottom: 0;
}
.tick {
  width: 12px;
  height: 12px;
  margin-left: 9px;
  box-sizing: border-box;
  border-right: 1.5px solid #111;
  border-bottom: 1.5px solid #111;
  background: #f8f8f8;
}
.spin {
  display: flex;
  justify-content: space-between;
  width: 50px;
  height: 24px;
  margin-left: 7px;
  box-sizing: border-box;
  padding: 0 6px 0 4px;
  border: 1px solid #777;
  background: #fff;
  font-size: 14px;
  line-height: 22px;
}
.spin-arrows { display: flex; flex-direction: column; gap: 3px; padding-top: 6px; }
.up { border: 3px solid transparent; border-bottom: 4px solid #c4c4c4; border-top: 0; }
.down { border: 3px solid transparent; border-top: 4px solid #8a8a8a; border-bottom: 0; }
.tools-sep { width: 1px; height: 32px; margin: 0 8px; background: #bbb; }
.player { background: #fbfbfb; border-right: 1px solid #999; }
.scene { display: block; }
.tool-axis { font-family: "Liberation Sans", sans-serif; font-size: 10px; fill: #333; }
.axis { font-family: "Liberation Sans", sans-serif; font-size: 13px; font-weight: 700; }
.legend-title { font-family: "Liberation Sans", sans-serif; font-size: 16.5px; fill: #222; }
.legend-tick { font-family: "Liberation Sans", sans-serif; font-size: 13px; fill: #222; }
.caption { font-family: "Noto Sans CJK SC", sans-serif; font-size: 15px; fill: #222; }
</style>
